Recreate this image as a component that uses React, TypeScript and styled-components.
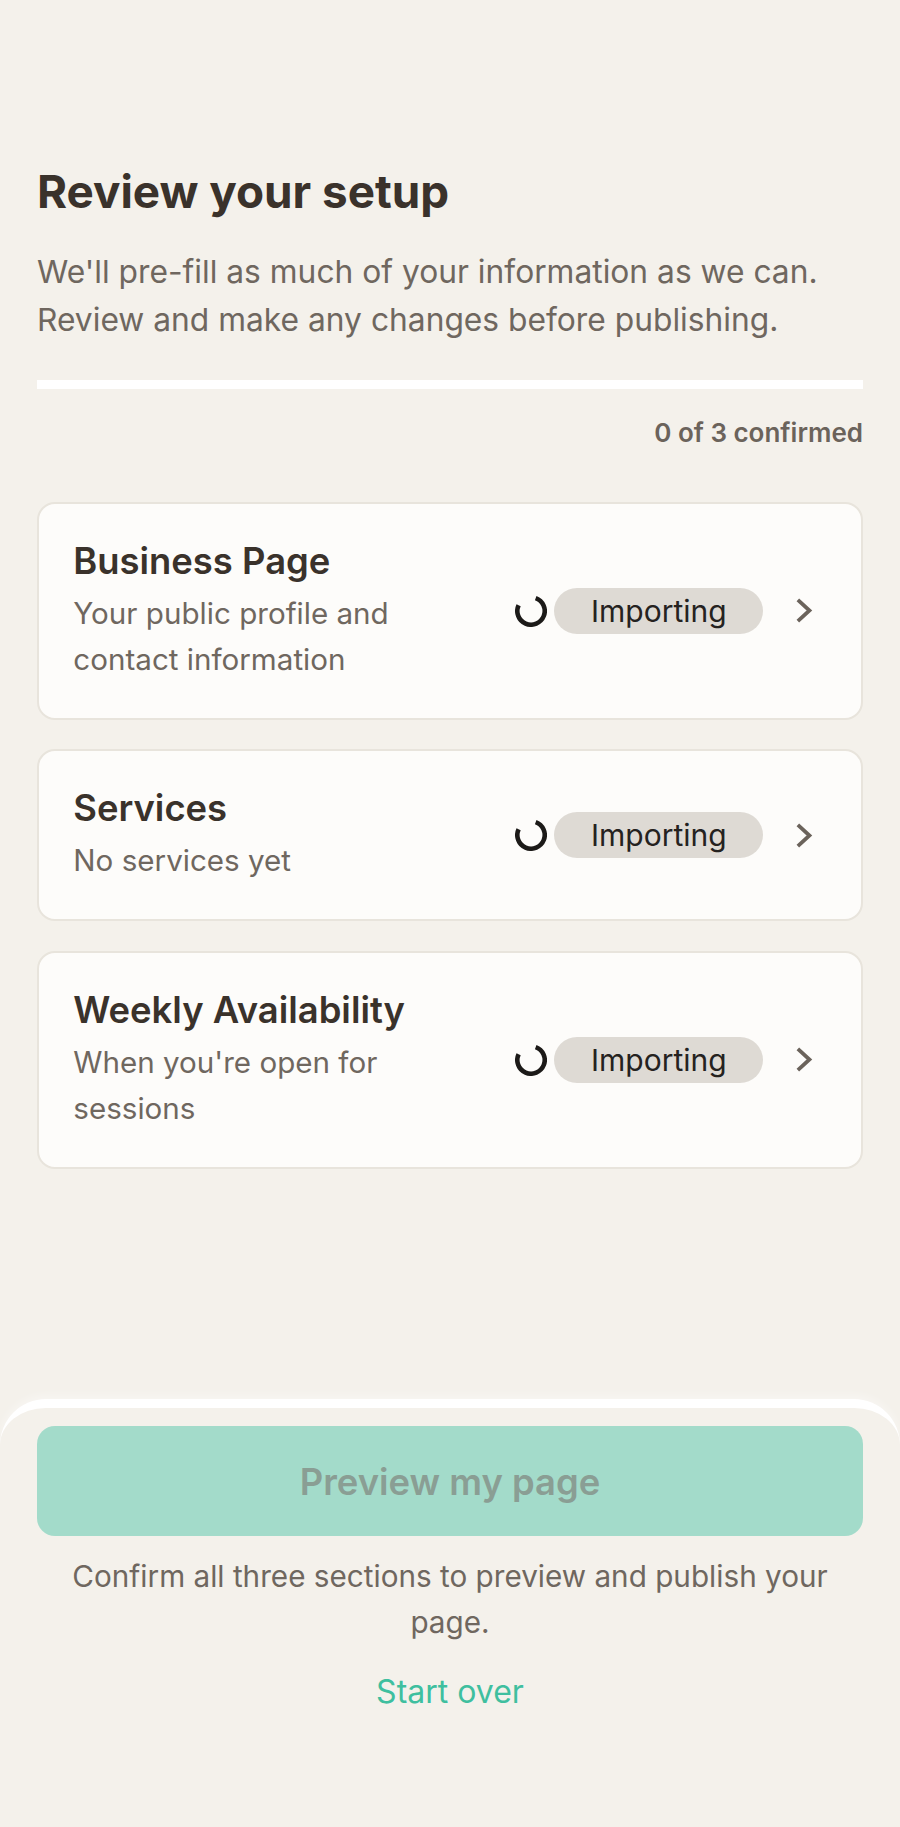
import React from 'react';
import styled, { createGlobalStyle } from 'styled-components';

const GlobalStyle = createGlobalStyle`
  html, body {
    margin: 0;
    padding: 0;
    background: #f4f1eb;
  }
  #root {
    min-height: 1827px;
  }
  * {
    box-sizing: border-box;
  }
`;

const Page = styled.div`
  display: flex;
  flex-direction: column;
  min-height: 1827px;
  font-family: Inter, 'Liberation Sans', sans-serif;
  color: #3a322b;
  background: #f4f1eb;
`;

const Content = styled.main`
  display: flex;
  flex-direction: column;
  padding: 161.5px 37px 0;
`;

const Title = styled.h1`
  margin: 0 0 26.5px;
  font-size: 45.8px;
  line-height: 60px;
  font-weight: 700;
  color: #3a322b;
`;

const Intro = styled.p`
  margin: 0 0 35.4px;
  font-size: 31.75px;
  line-height: 48.3px;
  font-weight: 400;
  color: #6f675f;
`;

const ProgressTrack = styled.div`
  height: 9px;
  background: #ffffff;
`;

const ProgressLabel = styled.div`
  margin: 26px 0 51px;
  font-size: 26px;
  line-height: 36px;
  font-weight: 600;
  text-align: right;
  color: #6b635b;
`;

const CardList = styled.div`
  display: flex;
  flex-direction: column;
  gap: 29.5px;
`;

const Card = styled.section`
  display: flex;
  align-items: center;
  justify-content: space-between;
  gap: 20px;
  padding: 36px 36.7px 36px 34.3px;
  background: #fdfcfa;
  border: 2px solid #e8e4dc;
  border-radius: 18px;
`;

const CardText = styled.div`
  display: flex;
  flex-direction: column;
  width: 340px;
`;

const CardTitle = styled.h2`
  margin: 0 0 8px;
  font-size: 36.4px;
  line-height: 42px;
  font-weight: 600;
  color: #3a322b;
`;

const CardSub = styled.p`
  margin: 0;
  font-size: 29.6px;
  line-height: 46px;
  color: #6f675f;
`;

const CardStatus = styled.div`
  display: flex;
  align-items: center;
  flex-shrink: 0;
`;

const Spinner = styled.svg`
  width: 32px;
  height: 32px;
  margin-right: 7px;
  fill: none;
  stroke: #1c1a18;
  stroke-width: 4.6;
`;

const Pill = styled.span`
  display: inline-flex;
  align-items: center;
  justify-content: center;
  width: 209px;
  height: 46px;
  border-radius: 23px;
  background: #dedad4;
  font-size: 30px;
  color: #25221f;
`;

const Chevron = styled.svg`
  width: 41px;
  height: 41px;
  margin-left: 20px;
  fill: none;
  stroke: #6b635b;
  stroke-width: 2.2;
  stroke-linecap: square;
  stroke-linejoin: miter;
`;

const Footer = styled.footer`
  display: flex;
  flex-direction: column;
  align-items: center;
  margin-top: auto;
  height: 428px;
  padding: 18px 37px 0;
  background: #f4f1eb;
  border-top: 9px solid #ffffff;
  border-radius: 46px 46px 0 0;
  box-shadow: 0 -4px 8px rgba(255, 255, 255, 0.35);
`;

const PrimaryButton = styled.button`
  width: 100%;
  height: 110px;
  padding: 1px 0 0;
  border: 0;
  border-radius: 18px;
  background: #a3dbca;
  font-family: inherit;
  font-size: 36.4px;
  font-weight: 600;
  color: #8a9e94;
`;

const Hint = styled.p`
  margin: 16.5px 0 0;
  font-size: 29.7px;
  line-height: 46px;
  text-align: center;
  color: #6f675f;
`;

const TextLink = styled.a`
  margin-top: 24.5px;
  font-size: 32px;
  line-height: 46px;
  color: #3fbf9f;
`;

const sections = [
  { title: 'Business Page', sub: 'Your public profile and contact information' },
  { title: 'Services', sub: 'No services yet' },
  { title: 'Weekly Availability', sub: "When you're open for sessions" },
];

export default function App() {
  return (
    <Page>
      <GlobalStyle />
      <Content>
        <Title>Review your setup</Title>
        <Intro>
          We'll pre-fill as much of your information as we can. Review and make any changes before
          publishing.
        </Intro>
        <ProgressTrack />
        <ProgressLabel>0 of 3 confirmed</ProgressLabel>
        <CardList>
          {sections.map(section => (
            <Card key={section.title}>
              <CardText>
                <CardTitle>{section.title}</CardTitle>
                <CardSub>{section.sub}</CardSub>
              </CardText>
              <CardStatus>
                <Spinner viewBox="0 0 32 32">
                  <path d="M20.7 3.1A13.7 13.7 0 1 1 3.6 10.2" />
                </Spinner>
                <Pill>Importing</Pill>
                <Chevron viewBox="0 0 24 24">
                  <path d="M9.5 6.5l6 5.5-6 5.5" />
                </Chevron>
              </CardStatus>
            </Card>
          ))}
        </CardList>
      </Content>
      <Footer>
        <PrimaryButton disabled>Preview my page</PrimaryButton>
        <Hint>Confirm all three sections to preview and publish your page.</Hint>
        <TextLink>Start over</TextLink>
      </Footer>
    </Page>
  );
}
